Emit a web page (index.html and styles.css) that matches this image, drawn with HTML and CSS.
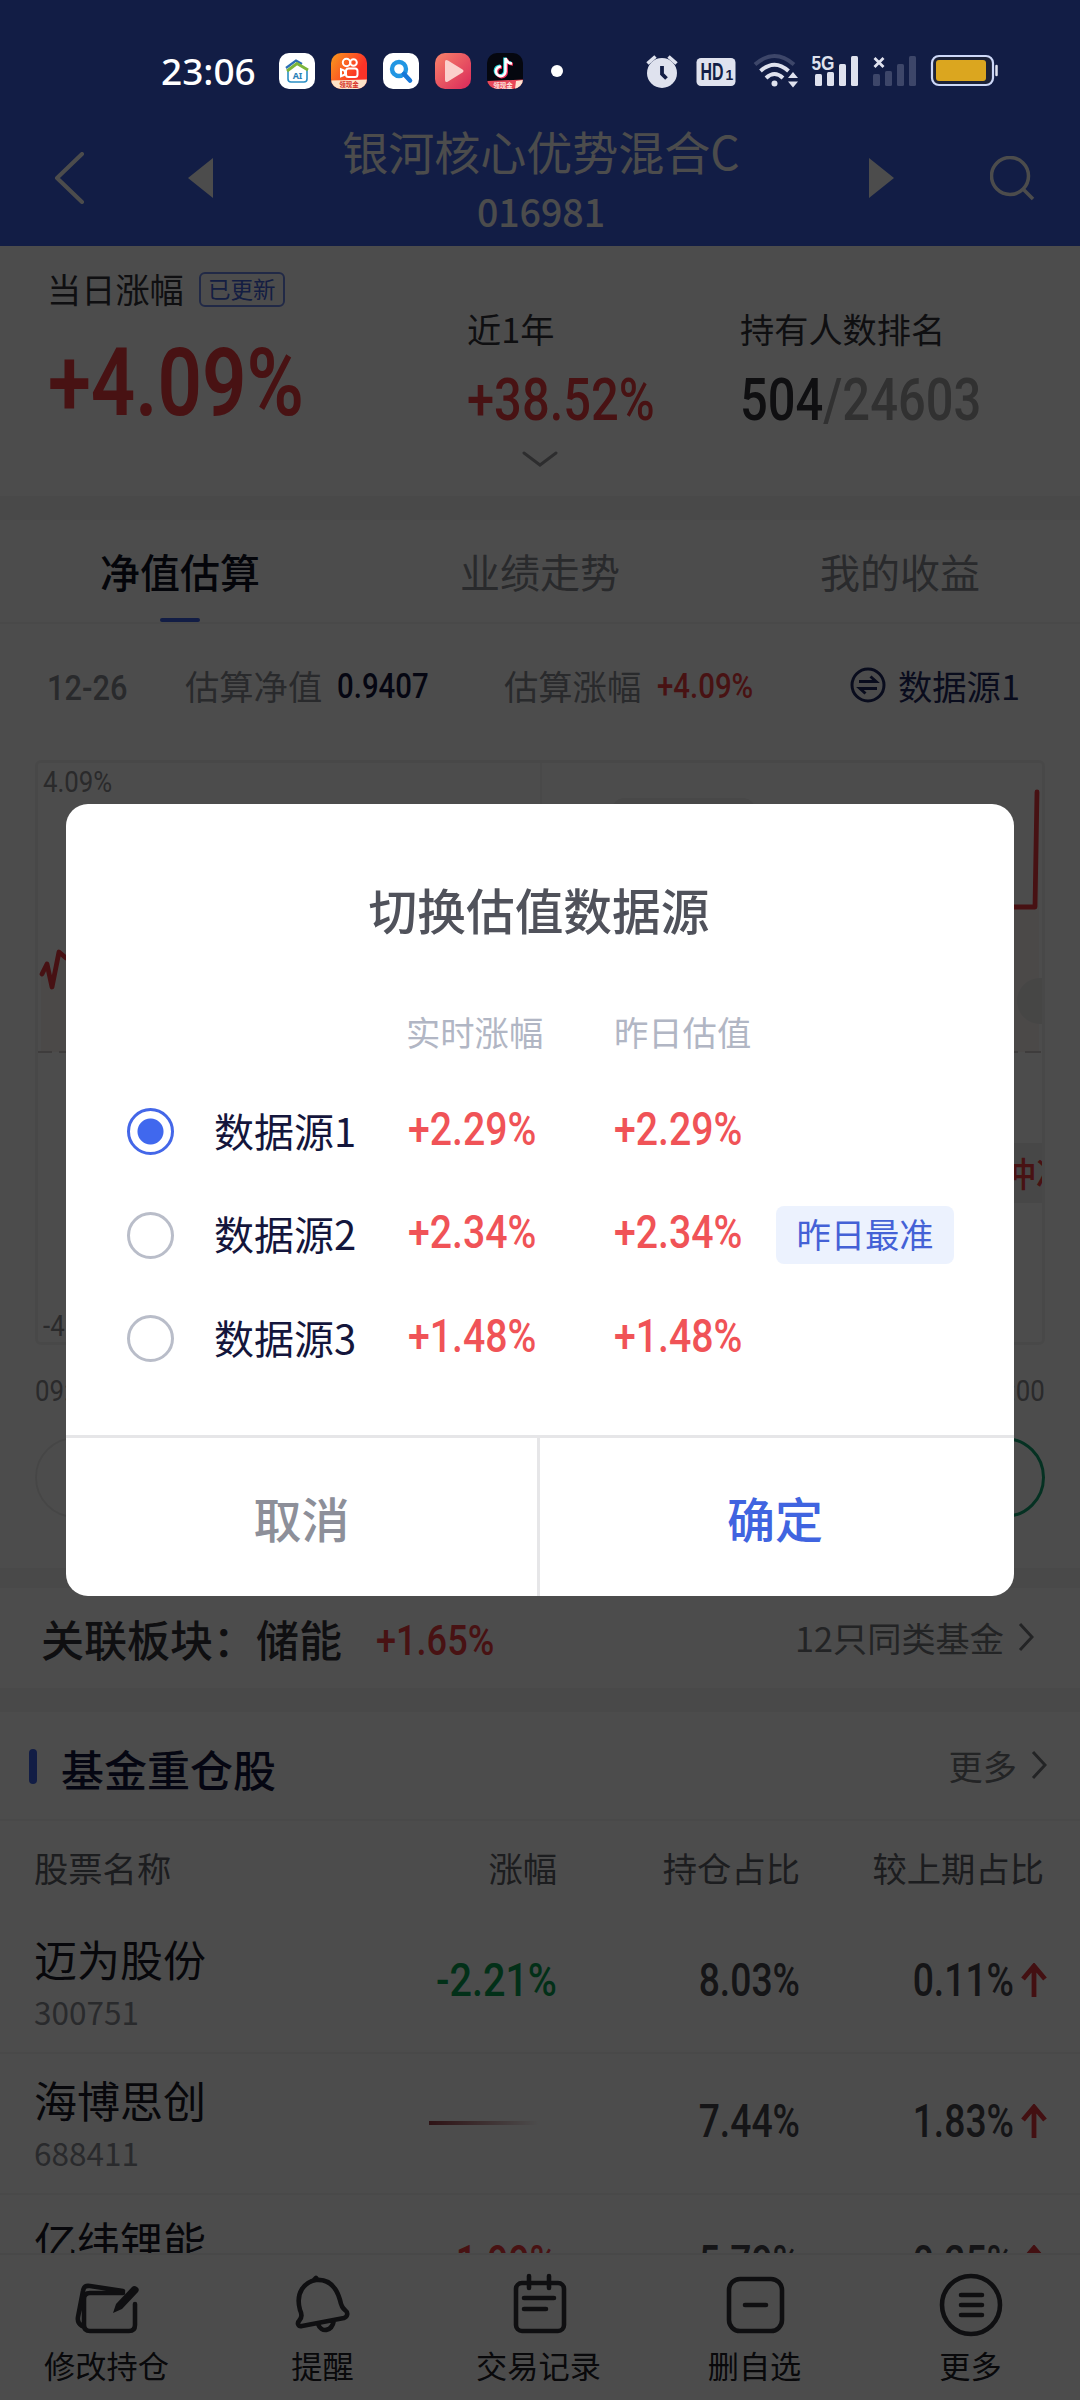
FILE: index.html
```html
<!DOCTYPE html>
<html lang="zh-CN">
<head>
<meta charset="utf-8">
<title>银河核心优势混合C</title>
<link rel="stylesheet" href="styles.css">
</head>
<body>
<div class="screen">
  <div class="statusbar">
    <span class="clock">23:06</span>
    <div class="apps">
      <svg class="app" viewBox="0 0 36 36"><rect width="36" height="36" rx="10" fill="#fff"/><path d="M9 18v8q0 3 3 3h13q3 0 3-3v-9" fill="none" stroke="#2a8fc4" stroke-width="1.6"/><path d="M7 15L17 7.500L23 11" fill="none" stroke="#2c6fb5" stroke-width="2.200"/><path d="M8 18L18 10.500L29 17" fill="none" stroke="#7cb53a" stroke-width="3"/><text x="18.500" y="25.500" class="app-ai">AI</text></svg>
      <svg class="app" viewBox="0 0 36 36"><defs><linearGradient id="ks" x1="0" x2="1" y2=".6"><stop stop-color="#fa9a1c"/><stop offset=".8" stop-color="#fb3328"/></linearGradient><clipPath id="r"><rect width="36" height="36" rx="10"/></clipPath></defs><g clip-path="url(#r)"><rect width="36" height="36" fill="url(#ks)"/><g fill="none" stroke="#fff" stroke-width="2"><circle cx="15.500" cy="9.500" r="3.700"/><circle cx="22.500" cy="9.500" r="3.300"/><rect x="15" y="15.500" width="11.500" height="8.500" rx="2.500"/><path d="M14 18l-4-1.800v7L14 21.500z"/></g><path d="M0 27.500l36-1V36H0z" fill="#fde3c8"/><text x="18" y="34" class="app-tag">领现金</text></g></svg>
      <svg class="app" viewBox="0 0 36 36"><rect width="36" height="36" rx="10" fill="#fff"/><circle cx="16" cy="16" r="7" fill="none" stroke="#2196e3" stroke-width="4.400"/><path d="M21 21l6 6.500" stroke="#1677d8" stroke-width="4.600" stroke-linecap="round"/></svg>
      <svg class="app" viewBox="0 0 36 36"><defs><linearGradient id="pl" x1="0" x2="1" y2="1"><stop stop-color="#f8836a"/><stop offset="1" stop-color="#d9285a"/></linearGradient></defs><rect width="36" height="36" rx="10" fill="url(#pl)"/><path d="M10 9q0-3 3-1.500l14.500 9q2 1.500 0 3L13 28.500q-3 1.500-3-1.500z" fill="#fbd0cc"/></svg>
      <svg class="app" viewBox="0 0 36 36"><g clip-path="url(#r)"><rect width="36" height="36" fill="#05070f"/><g fill="none" stroke-width="3"><path d="M18.500 5v13.500a4.800 4.800 0 1 1-4.500-5M18.500 5q1 5 6.500 5.500" stroke="#25d6dd" transform="translate(-.8 -.5)"/><path d="M18.500 5v13.500a4.800 4.800 0 1 1-4.500-5M18.500 5q1 5 6.500 5.500" stroke="#f0305a" transform="translate(1 .8)"/><path d="M18.500 5v13.500a4.800 4.800 0 1 1-4.500-5M18.500 5q1 5 6.500 5.500" stroke="#fff" stroke-width="2.600"/></g><path d="M0 28l36-1.500V36H0z" fill="#e8485a"/><path d="M29 28l7-1v9h-8z" fill="#fde3d0"/><text x="16" y="34.500" class="app-tag app-tag-light">领现金</text></g></svg>
    </div>
    <i class="dot"></i>
    <svg class="sys" viewBox="640 50 362 42" fill="#dfe2ee">
      <circle cx="662" cy="73" r="15"/><path d="M647.500 63.500l8-7M676.500 63.500l-8-7" stroke="#dfe2ee" stroke-width="3.600"/><path d="M662 66v8l4.500 4.500" fill="none" stroke="#121d45" stroke-width="3.800"/>
      <rect x="696.500" y="58" width="39" height="28" rx="4.500"/><text x="700.500" y="80" class="hd" textLength="23" lengthAdjust="spacingAndGlyphs">HD</text><text x="725.500" y="80" class="hd-one">1</text>
      <g fill="none" stroke="#dfe2ee" stroke-width="4"><path d="M755 64.500q19.500-17 39 0" stroke="#3d4669"/><path d="M760.500 71q14-12.500 28 0"/><path d="M766 78q8.500-8 17 0"/></g><circle cx="774.500" cy="83.500" r="3"/><path d="M788 78l5-6 5 6zM788 81.500l5 6 5-6z"/>
      <text x="811.500" y="70" class="net" textLength="23" lengthAdjust="spacingAndGlyphs">5G</text>
      <rect x="815" y="74" width="7" height="12" rx="1.500"/><rect x="827" y="72" width="7" height="14" rx="1.500"/><rect x="839" y="64" width="7" height="22" rx="1.500"/><rect x="851" y="56" width="7" height="30" rx="1.500"/>
      <g fill="#3d4669"><rect x="873" y="74" width="7" height="12" rx="1.500"/><rect x="885" y="71" width="7" height="15" rx="1.500"/><rect x="897" y="64" width="7" height="22" rx="1.500"/><rect x="909" y="56" width="7" height="30" rx="1.500"/></g>
      <path d="M874.500 58l9 9M883.500 58l-9 9" stroke="#dfe2ee" stroke-width="2.800"/>
      <rect x="932" y="56" width="61" height="29" rx="7" fill="#1c2238" stroke="#cdd8f8" stroke-width="2.200"/><rect x="936" y="60" width="50" height="21" rx="3" fill="#dba61f"/><path d="M996.500 66v9" stroke="#dfe2ee" stroke-width="2.500" stroke-linecap="round"/>
    </svg>
  </div>

  <header class="header">
    <svg class="ico-back" viewBox="0 0 32 52"><path d="M29 2L4 26l25 24"/></svg>
    <svg class="ico-prev" viewBox="0 0 25 40"><path d="M0 20L25 0v40z"/></svg>
    <div class="fund"><h1>银河核心优势混合C</h1><p>016981</p></div>
    <svg class="ico-next" viewBox="0 0 25 40"><path d="M25 20L0 0v40z"/></svg>
    <svg class="ico-search" viewBox="0 0 46 46"><circle cx="20" cy="20" r="18.500"/><path d="M33 33l10 10"/></svg>
  </header>

  <main class="main">
    <section class="summary">
      <div class="today">
        <div class="lab">当日涨幅<span class="updated">已更新</span></div>
        <b class="num n-xl red">+4.09%</b>
      </div>
      <div class="stat stat-year"><div class="lab">近1年</div><b class="num n-lg red">+38.52%</b></div>
      <div class="stat"><div class="lab">持有人数排名</div><b class="num n-lg dark">504<span class="total">/24603</span></b></div>
      <svg class="expand" viewBox="0 0 36 18"><path d="M2 3l16 12L34 3"/></svg>
    </section>

    <nav class="tabs"><span class="tab on">净值估算</span><span class="tab">业绩走势</span><span class="tab">我的收益</span></nav>

    <div class="estimate">
      <span class="num n-sm date">12-26</span>
      <span class="key key-nav">估算净值</span><b class="num n-sm navy">0.9407</b>
      <span class="key key-pct">估算涨幅</span><b class="num n-sm red">+4.09%</b>
      <span class="source"><svg viewBox="0 0 36 36"><circle cx="18" cy="18" r="16"/><path d="M9 14.500h17l-5.500-5M27 21.500H10l5.500 5"/></svg>数据源1</span>
    </div>

    <div class="chart">
      <div class="plot">
        <svg viewBox="0 0 1008 584">
          <path d="M505 0v584" stroke="#f3f3f3" stroke-width="2"/>
          <path d="M5 213L11 203l5 23 7-35 7 6L978 146h23l2-116v261H5z" fill="#fbf5f2"/>
          <rect x="576" y="37" width="143" height="50" rx="12" fill="#f0f0f0"/>
          <circle cx="1004" cy="240" r="23" fill="#ebe9e8"/>
          <path d="M0 291h1008" stroke="#d0c8c8" stroke-width="2" stroke-dasharray="16 7"/>
          <path d="M6 213L11 203l5 23 7-35 7 6M978 146h21l2-115" fill="none" stroke="#ee3a40" stroke-width="4.800" stroke-linecap="round" stroke-linejoin="round"/>
          <rect x="900" y="382" width="108" height="60" fill="#efefef"/>
        </svg>
        <span class="num n-xs top">4.09%</span>
        <span class="num n-xs bottom">-4.09%</span>
        <span class="barrage">冲冲冲</span>
      </div>
      <div class="axis"><span class="num n-xs">09:30</span><span class="num n-xs end">15:00</span></div>
      <div class="pills"><i class="pill"></i><i class="pill green"></i></div>
    </div>

    <section class="related">
      <h2>关联板块：储能</h2><b class="num n-md red">+1.65%</b>
      <span class="link">12只同类基金<svg viewBox="0 0 16 30"><path d="M2 2l12 13L2 28"/></svg></span>
    </section>

    <section class="holdings">
      <div class="head"><h2>基金重仓股</h2><span class="link">更多<svg viewBox="0 0 16 30"><path d="M2 2l12 13L2 28"/></svg></span></div>
      <div class="row cols"><span>股票名称</span><span>涨幅</span><span>持仓占比</span><span>较上期占比</span></div>
      <div class="row stock">
        <div class="name">迈为股份<small>300751</small></div>
        <b class="num n-row green-t">-2.21%</b><span class="num n-row">8.03%</span><span class="num n-row delta">0.11%</span>
        <svg class="up" viewBox="0 0 26 36"><path d="M13 34V3M2 16L13 3l11 13"/></svg>
      </div>
      <div class="row stock">
        <div class="name">海博思创<small>688411</small></div>
        <i class="trace"></i><span class="num n-row">7.44%</span><span class="num n-row delta">1.83%</span>
        <svg class="up" viewBox="0 0 26 36"><path d="M13 34V3M2 16L13 3l11 13"/></svg>
      </div>
      <div class="row stock">
        <div class="name">亿纬锂能<small>300014</small></div>
        <b class="num n-row red">1.99%</b><span class="num n-row">5.79%</span><span class="num n-row delta">0.25%</span>
        <svg class="up" viewBox="0 0 26 36"><path d="M13 34V3M2 16L13 3l11 13"/></svg>
      </div>
    </section>
  </main>

  <nav class="toolbar">
    <span><svg viewBox="0 0 64 64"><path d="M48 18L15 13q-6-1-7 5L3 44q-1 6 4 9M48 20H15q-6 0-6 6v26q0 6 6 6h39q6 0 6-6V31"/><path d="M38 40l3-9 16-17q2-2 5 0t1 5L47 36z" fill="#33343a" stroke="none"/></svg>修改持仓</span>
    <span><svg viewBox="0 0 64 64"><path d="M11 53c-4 1-5-3-3-5 3-3 3-7 1-11C4 19 14 9 25 7c12-1 20 6 24 20 1 5 2 8 5 10 4 3 2 7-1 8zM27 51c3 9 14 8 16-4M23 7l2-2"/></svg>提醒</span>
    <span><svg viewBox="0 0 64 64"><rect x="9" y="10" width="48" height="48" rx="6"/><path d="M22 3v12M42 3v12M17 25h30M17 36h22"/></svg>交易记录</span>
    <span><svg viewBox="0 0 64 64"><rect x="6" y="6" width="53" height="52" rx="11"/><path d="M22 32h21"/></svg>删自选</span>
    <span><svg viewBox="0 0 64 64"><circle cx="32" cy="32" r="29"/><path d="M22 22h21M22 32h21M22 42h21"/></svg>更多</span>
  </nav>

  <div class="overlay">
    <div class="modal">
      <h3>切换估值数据源</h3>
      <div class="opts">
        <div class="opt opt-head"><span></span><span></span><span>实时涨幅</span><span>昨日估值</span></div>
        <div class="opt"><i class="radio on"></i><span class="opt-name">数据源1</span><b class="num n-row">+2.29%</b><b class="num n-row">+2.29%</b></div>
        <div class="opt"><i class="radio"></i><span class="opt-name">数据源2</span><b class="num n-row">+2.34%</b><b class="num n-row">+2.34%</b><span class="best">昨日最准</span></div>
        <div class="opt"><i class="radio"></i><span class="opt-name">数据源3</span><b class="num n-row">+1.48%</b><b class="num n-row">+1.48%</b></div>
      </div>
      <div class="actions"><button class="cancel">取消</button><button class="ok">确定</button></div>
    </div>
  </div>
</div>
</body>
</html>
```
FILE: styles.css
```css
* { box-sizing: border-box; margin: 0; padding: 0; }
body { width: 1080px; height: 2400px; font-family: "Noto Sans CJK SC", sans-serif; background: #fff; color: #33343a; }
h1, h2, h3 { font-weight: 500; }
i { font-style: normal; }
.screen { position: relative; width: 1080px; height: 2400px; display: flex; flex-direction: column; overflow: hidden; background: #fff; }

/* status bar stays lit above the dimming overlay */
.statusbar { position: relative; z-index: 3; height: 112px; flex: none; display: flex; align-items: flex-start; padding: 53px 0 0 161px; margin-bottom: -112px; }
.clock { width: 118px; margin-top: -2px; font: 500 37px/40px "Noto Sans", sans-serif; color: #fff; }
.apps { display: flex; gap: 16px; }
.app { width: 36px; height: 36px; }
.app-ai { font: 700 9px "Noto Sans", sans-serif; fill: #2a7fb8; text-anchor: middle; }
.app-tag { font: 700 6.500px "Noto Sans CJK SC", sans-serif; fill: #d8322a; text-anchor: middle; }
.app-tag-light { fill: #ffe3dc; }
.dot { width: 12px; height: 12px; border-radius: 50%; background: #fff; margin: 12px 0 0 28px; }
.sys { width: 362px; height: 42px; margin: -3px 0 0 77px; }
.hd { font: 700 23px "Liberation Sans", sans-serif; fill: #121d45; }
.hd-one { font: 700 14px "Liberation Sans", sans-serif; fill: #121d45; }
.net { font: 700 21px "Liberation Sans", sans-serif; }

.header { height: 246px; flex: none; background: #3c61e6; color: #fff; display: flex; align-items: flex-start; padding: 0 46px 0 53px; fill: #fff; }
.ico-back { width: 32px; height: 52px; margin-top: 152px; fill: none; stroke: #fff; stroke-width: 4; stroke-linecap: round; stroke-linejoin: round; }
.ico-prev { width: 25px; height: 40px; margin: 158px 0 0 103px; }
.fund { flex: 1; text-align: center; margin-top: 120px; }
.fund h1 { font-size: 46px; line-height: 60px; font-weight: 400; }
.fund p { font-size: 37.500px; line-height: 56px; font-weight: 500; margin-top: 3px; }
.ico-next { width: 25px; height: 40px; margin: 158px 95px 0 0; }
.ico-search { width: 46px; height: 46px; margin-top: 156px; margin-right: -2px; fill: none; stroke: #fff; stroke-width: 3.500; }
.ico-next + .ico-search { margin-left: 1px; }

/* condensed numerals */
.num { font-family: Roboto, sans-serif; font-weight: 500; display: block; white-space: nowrap; transform: scaleX(.82); transform-origin: 0 50%; line-height: 1; }
.n-xl { font-size: 95px; font-weight: 600; }
.n-lg { font-size: 59px; transform: scaleX(.828); }
.n-row { font-size: 46px; }
.n-md { font-size: 43px; transform: scaleX(.84); }
.n-sm { font-size: 35px; transform: scaleX(.84); }
.n-xs { font-size: 30px; color: #8c8c90; font-weight: 400; transform: scaleX(.86); }
.red { color: #f03e42; }
.dark { color: #33343a; }
.navy { color: #12163c; }
.green-t { color: #07a052; }

.main { flex: 1; min-height: 0; overflow: hidden; display: flex; flex-direction: column; }
.main > * { flex: none; }
.summary { position: relative; height: 274px; border-bottom: 24px solid #f6f6f6; display: flex; padding-left: 47px; }
.lab { font-size: 34.200px; line-height: 50px; display: flex; align-items: center; }
.today { width: 420px; padding-top: 17px; }
.today .num { margin: 22px 0 0 1px; }
.updated { margin: 2px 0 0 15px; width: 86px; height: 35px; border: 2px solid #6f89ea; border-radius: 6px; font-size: 22.500px; line-height: 29px; text-align: center; color: #4564dc; }
.stat { padding-top: 57px; }
.stat .num { margin-top: 17px; }
.stat-year { width: 273px; }
.total { color: #a3a3a6; }
.expand { position: absolute; left: 522px; top: 204px; width: 36px; height: 18px; fill: none; stroke: #98989c; stroke-width: 3; stroke-linecap: round; }

.tabs { height: 104px; display: flex; border-bottom: 2px solid #f5f5f5; }
.tab { flex: 1; display: flex; flex-direction: column; align-items: center; font-size: 40px; line-height: 60px; padding-top: 21px; color: #8b8c93; }
.tab.on { color: #101223; font-weight: 500; }
.tab.on::after { content: ""; width: 40px; height: 7px; border-radius: 4px; background: #3c61e6; margin-top: 17px; }

.estimate { height: 136px; display: flex; align-items: flex-start; padding-left: 47px; }
.estimate .num { line-height: 36px; margin-top: 45px; }
.estimate .date { width: 138px; margin-top: 47px; color: #8b8c93; transform: scaleX(.88); }
.key { font-size: 34.300px; line-height: 50px; width: 152px; color: #8b8c93; }
.estimate > .key, .estimate > .source { margin-top: 36px; }
.estimate .navy { width: 167px; }
.estimate .red { width: 193px; margin-left: 1px; }
.source { display: flex; align-items: center; font-size: 34.300px; line-height: 50px; color: #1f2a63; }
.source svg { width: 36px; height: 36px; margin: 0 12px 0 0; fill: none; stroke: #1f2a63; stroke-width: 3; }

.chart { height: 828px; border-bottom: 20px solid #f6f6f6; }
.plot { position: relative; margin: 0 35px; height: 585px; border: 3px solid #f2f2f2; border-radius: 6px; overflow: hidden; }
.plot svg { position: absolute; left: -2px; top: -2px; width: 1008px; height: 584px; }
.top { position: absolute; left: 5px; top: 4px; }
.bottom { position: absolute; left: 5px; bottom: 1px; }
.barrage { position: absolute; left: 930px; top: 385px; font-size: 34px; line-height: 50px; font-weight: 500; color: #f03e42; white-space: nowrap; }
.axis { display: flex; justify-content: space-between; padding: 31px 35px 0; }
.end { transform-origin: 100% 50%; }
.pills { display: flex; justify-content: space-between; padding: 31px 35px 0; }
.pill { width: 300px; height: 81px; border: 2px solid #ececec; border-radius: 41px; }
.pill.green { border: 3px solid #13a574; }

.related { height: 124px; display: flex; align-items: flex-start; padding: 20px 46px 0 41px; border-bottom: 24px solid #f6f6f6; }
h2 { font-size: 43px; line-height: 60px; }
.related .num { margin: 11px 0 0 34px; }
.link { margin-left: auto; display: flex; align-items: center; font-size: 34.200px; line-height: 50px; color: #77787e; }
.link svg { width: 16px; height: 30px; margin: 0 0 0 14px; fill: none; stroke: #77787e; stroke-width: 3; }

.head { height: 109px; display: flex; align-items: flex-start; padding: 26px 33px 0 29px; border-bottom: 2px solid #f4f4f4; }
.head h2 { display: flex; align-items: center; color: #12163c; }
.head h2::before { content: ""; width: 8px; height: 35px; border-radius: 4px; background: #3c61e6; margin: -4px 24px 0 0; }
.related .link { margin-top: 4px; }
.head .link { margin-top: 2px; }
.row { display: grid; grid-template-columns: 272px 251px 243px 214px 30px; padding-left: 34px; }
.cols { height: 92px; font-size: 34.300px; line-height: 50px; padding-top: 21px; color: #606168; }
.cols span + span { text-align: right; }
.cols span:last-child { grid-column: 4 / 6; padding-right: 0; }
.stock { height: 141px; border-bottom: 2px solid #f5f5f5; color: #46474d; }
.name { font-size: 43px; line-height: 60px; padding-top: 15px; color: #191a26; }
.name small { display: block; font-size: 31.500px; line-height: 40px; color: #8b8c93; margin-top: 3px; }
.stock .num { text-align: right; transform: scaleX(.81); transform-origin: 100% 50%; margin-top: 44px; }
.stock .green-t { transform: scaleX(.86); }
.trace { margin: 67px 0 0 123px; height: 4px; width: 110px; background: linear-gradient(90deg, #9c4048, #ffffff); }
.up { width: 26px; height: 36px; margin: 50px 0 0 7px; fill: none; stroke: #e0363c; stroke-width: 4.800; }

.toolbar { height: 147px; flex: none; display: flex; border-top: 2px solid #f0f0f0; background: #fff; color: #202127; }
.toolbar span { width: 216.200px; display: flex; flex-direction: column; align-items: center; font-size: 31.200px; line-height: 44px; position: relative; left: -1.500px; }
.toolbar svg { width: 64px; height: 64px; margin: 18px 0 6px; fill: none; stroke: #33343a; stroke-width: 4.600; stroke-linecap: round; stroke-linejoin: round; }

.overlay { position: absolute; inset: 0; z-index: 2; background: rgba(0, 0, 0, .7); padding: 804px 66px 0; }
.modal { height: 792px; background: #fff; border-radius: 22px; overflow: hidden; display: flex; flex-direction: column; }
.modal h3 { font-size: 48.700px; line-height: 70px; margin: 70px 2px 0 0; text-align: center; color: #50525b; }
.opts { flex: 1; padding: 62px 0 0 61px; }
.opt { display: grid; grid-template-columns: 87px 194px 206px 162px 178px; align-items: center; height: 103.500px; color: #f05357; }
.opt-head { height: 50px; margin-bottom: 24px; font-size: 34.300px; line-height: 50px; color: #b1b6c4; }
.opt-head span:nth-child(3) { margin-left: -2px; }
.opt .num { margin-top: -6px; transform: scaleX(.853); }
.radio { width: 47px; height: 47px; border: 3px solid #b9bdc9; border-radius: 50%; }
.radio.on { border-color: #4467e8; background: radial-gradient(circle, #4068ee 12.500px, #fff 13.500px); }
.opt-name { font-size: 40px; line-height: 60px; color: #14163c; margin-top: -4px; }
.best { height: 58px; border-radius: 8px; background: #ecf2fe; color: #4461d6; font-size: 34.300px; line-height: 55px; text-align: center; }
.actions { height: 161px; display: flex; border-top: 3px solid #e6e6e8; }
.actions button { border: 0; background: none; font: 500 48px/70px "Noto Sans CJK SC", sans-serif; }
.actions .cancel { width: 471px; color: #8d8f99; }
.actions .ok { flex: 1; padding-right: 4px; color: #4064e0; border-left: 3px solid #e6e6e8; }
```
